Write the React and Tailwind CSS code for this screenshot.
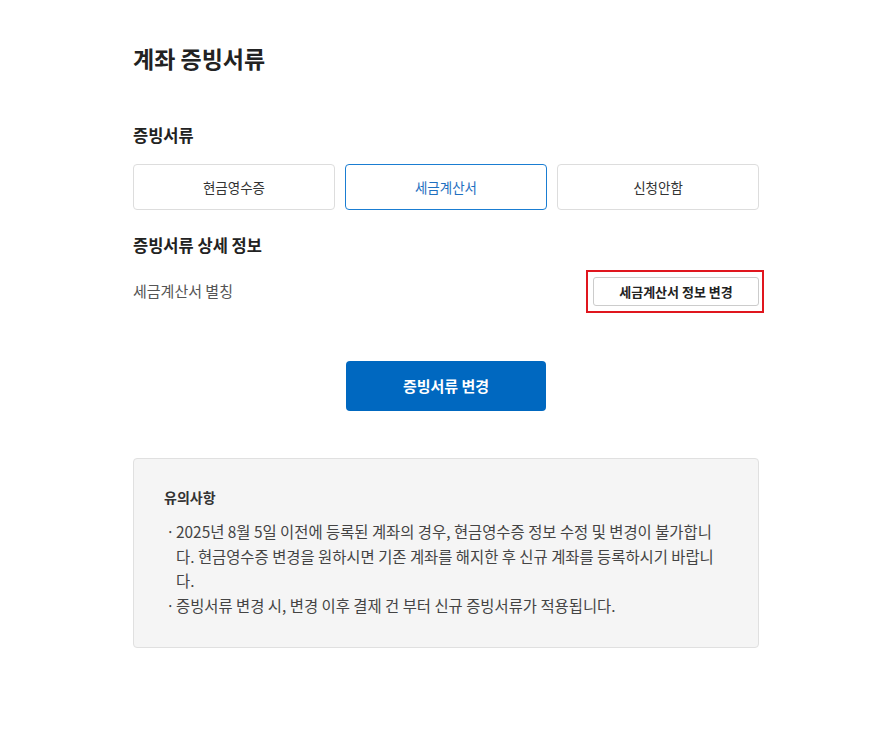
import React from "react";

const font = { fontFamily: '"Noto Sans CJK KR", "Noto Sans", sans-serif' };

const tabs = ["현금영수증", "세금계산서", "신청안함"];

const notices = [
  "2025년 8월 5일 이전에 등록된 계좌의 경우, 현금영수증 정보 수정 및 변경이 불가합니다. 현금영수증 변경을 원하시면 기존 계좌를 해지한 후 신규 계좌를 등록하시기 바랍니다.",
  "증빙서류 변경 시, 변경 이후 결제 건 부터 신규 증빙서류가 적용됩니다.",
];

export default function App() {
  const selected = 1;

  return (
    <div className="min-h-[733px] bg-white text-[#222]" style={font}>
      <div className="ml-[133px] w-[626px] pt-[42px]">
        <h1 className="text-[23px] leading-[32px] font-bold">계좌 증빙서류</h1>

        <h2 className="mt-[49px] text-[16.5px] leading-[24px] font-bold">증빙서류</h2>

        <div className="mt-[17px] grid grid-cols-3 gap-[10px]">
          {tabs.map((t, i) => (
            <button
              key={t}
              className={
                i === selected
                  ? "h-[46px] rounded-[4px] border border-[#1a7dd2] bg-white text-[13.5px] text-[#1f70c0]"
                  : "h-[46px] rounded-[4px] border border-[#dddddd] bg-white text-[13.5px] text-[#333]"
              }
            >
              {t}
            </button>
          ))}
        </div>

        <h2 className="mt-[23px] text-[16.5px] leading-[24px] font-bold">증빙서류 상세 정보</h2>

        <div className="mt-[20px] flex items-center justify-between">
          <span className="text-[15px] text-[#555]">세금계산서 별칭</span>
          <div className="relative">
            <button className="h-[29px] w-[166px] rounded-[3px] border border-[#cccccc] bg-white text-[13px] font-bold text-[#222]">
              세금계산서 정보 변경
            </button>
            <span className="pointer-events-none absolute -left-[7px] -right-[5px] -top-[7px] -bottom-[7px] border-2 border-[#e0161e]" />
          </div>
        </div>

        <div className="mt-[55px] flex justify-center">
          <button className="h-[50px] w-[200px] rounded-[4px] bg-[#0068c0] text-[15px] font-bold text-white">
            증빙서류 변경
          </button>
        </div>

        <div className="mt-[47px] rounded-[4px] border border-[#e0e0e0] bg-[#f5f5f5] px-[30px] pt-[28px] pb-[30px]">
          <p className="text-[14px] leading-[20px] font-bold text-[#333]">유의사항</p>
          <ul className="mt-[12px] w-[560px]">
            {notices.map((n) => (
              <li key={n} className="flex text-[15.4px] leading-[24.5px] text-[#444]">
                <span className="w-[12px] shrink-0 pl-[2px]">·</span>
                <span>{n}</span>
              </li>
            ))}
          </ul>
        </div>
      </div>
    </div>
  );
}
